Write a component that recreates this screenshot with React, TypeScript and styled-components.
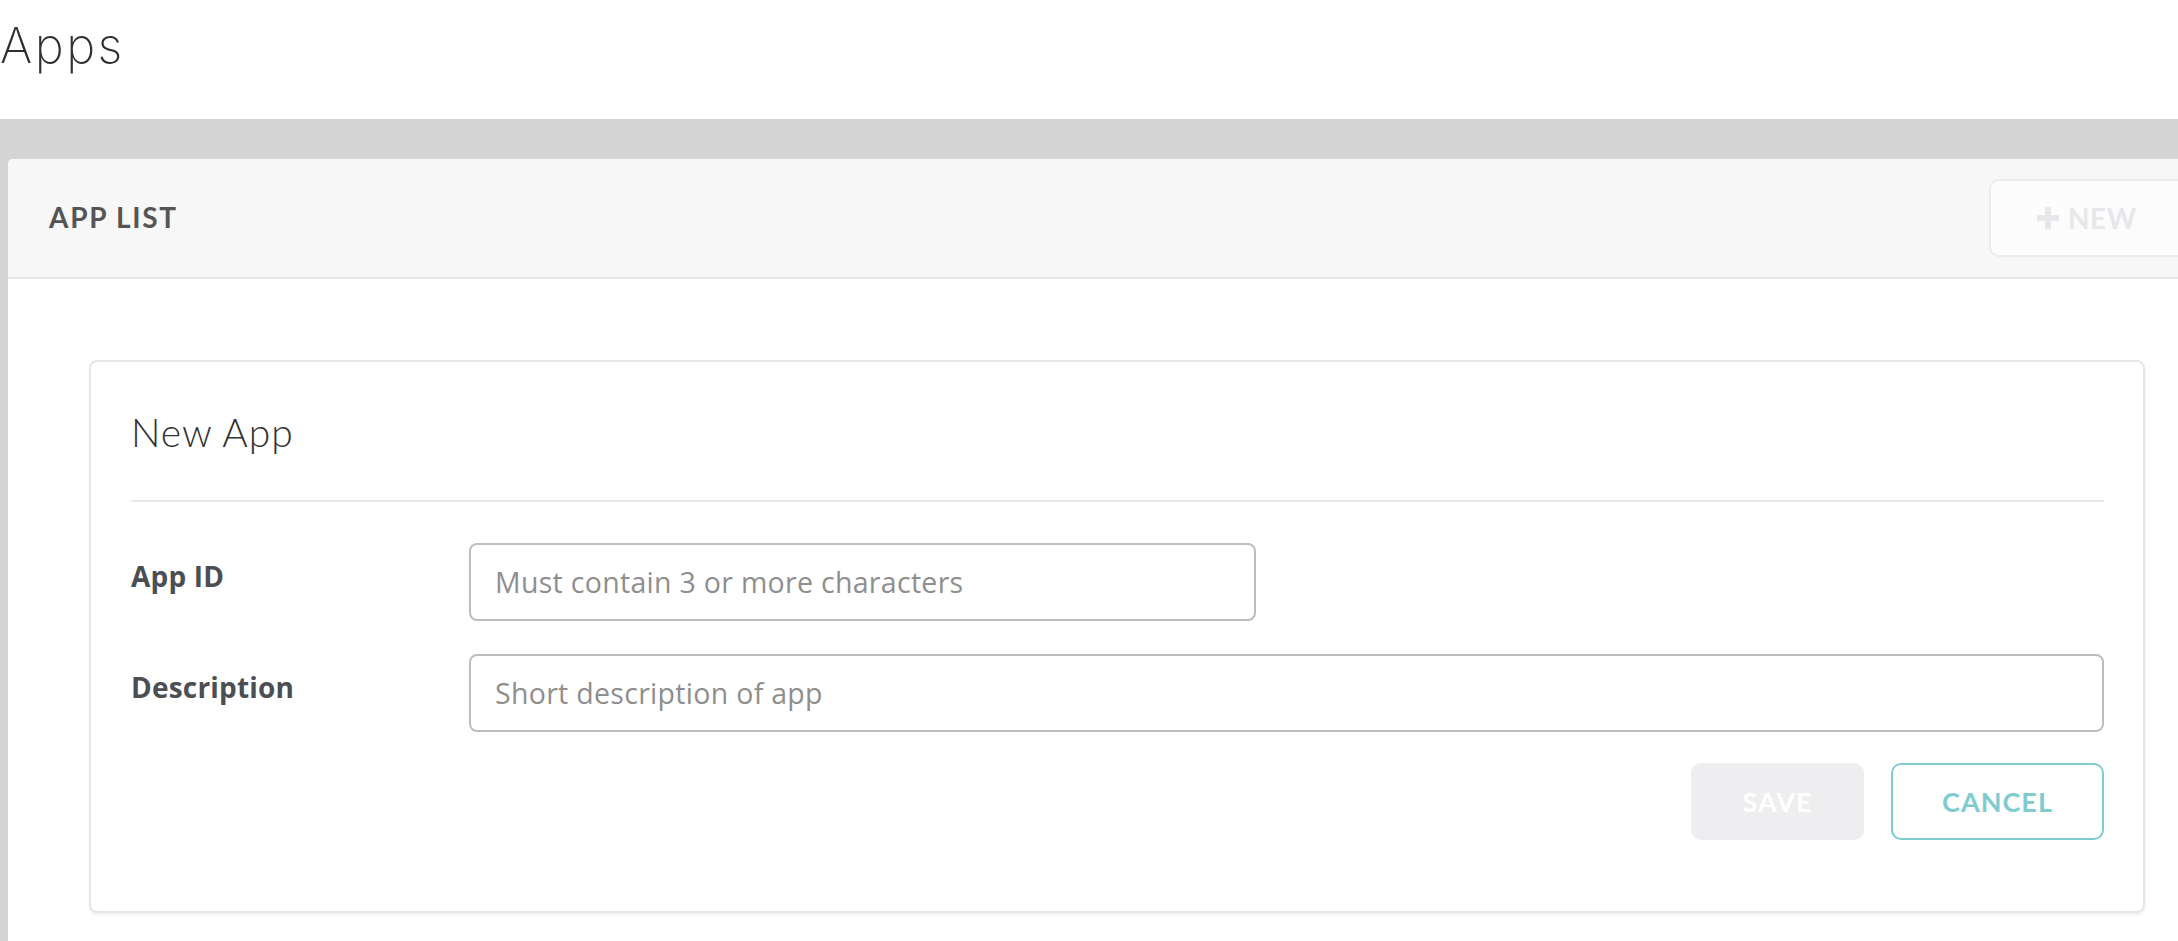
import React from "react";
import styled, { createGlobalStyle } from "styled-components";

const GlobalStyle = createGlobalStyle`
  *, *::before, *::after { box-sizing: border-box; }
  html, body { margin: 0; padding: 0; background: #ffffff; }
  body { font-family: Lato, "Open Sans", Arial, sans-serif; overflow: hidden; }
`;

const Page = styled.div`
  display: flex;
  flex-direction: column;
  height: 941px;
  overflow: hidden;
`;

const TitleBar = styled.header`
  height: 119px;
  flex: none;
  padding-top: 21px;
`;

const PageTitle = styled.h1`
  margin: 0;
  font-family: Inter, Lato, sans-serif;
  font-weight: 200;
  font-size: 49px;
  line-height: 49px;
  letter-spacing: 2.5px;
  color: #2f2f33;
`;

const Stage = styled.main`
  flex: 1;
  background: #d4d4d4;
  padding: 40px 0 0 8px;
  overflow: hidden;
  display: flex;
  flex-direction: column;
`;

const Card = styled.section`
  width: 2218px;
  flex: 1;
  background: #ffffff;
  border-radius: 5px 5px 0 0;
  display: flex;
  flex-direction: column;
`;

const CardHeader = styled.div`
  height: 120px;
  flex: none;
  display: flex;
  align-items: center;
  justify-content: space-between;
  padding: 0 27px 0 41px;
  background: #f7f7f7;
  border-bottom: 2px solid #e6e6e6;
  border-radius: 5px 5px 0 0;
`;

const HeaderTitle = styled.h2`
  margin: 0;
  font-size: 28px;
  font-weight: 700;
  letter-spacing: 1.7px;
  color: #555555;
  line-height: 1.2;
`;

const NewButton = styled.button`
  width: 210px;
  height: 78px;
  display: flex;
  align-items: center;
  gap: 9px;
  padding: 0 0 0 46px;
  background: #fcfcfc;
  border: 2px solid #ebebeb;
  border-radius: 10px;
  color: #e6e7ea;
  font-family: Lato, sans-serif;
  font-size: 28px;
  font-weight: 700;
  letter-spacing: 0.5px;
  cursor: default;
`;

const CardBody = styled.div`
  flex: 1;
  padding: 81px 81px 0 81px;
`;

const Panel = styled.div`
  border: 2px solid #e6e6e6;
  border-radius: 8px;
  padding: 0 39px 71px 40px;
  box-shadow: 0 2px 3px rgba(0, 0, 0, 0.06);
`;

const PanelHeader = styled.div`
  height: 140px;
  display: flex;
  align-items: center;
  border-bottom: 2px solid #e8e8e8;
`;

const PanelTitle = styled.h3`
  margin: 0;
  font-size: 39px;
  font-weight: 300;
  letter-spacing: 1px;
  color: #333333;
  line-height: 1.2;
  padding-top: 2px;
`;

const Form = styled.form`
  padding-top: 41px;
  display: flex;
  flex-direction: column;
  gap: 33px;
`;

const Row = styled.div`
  display: grid;
  grid-template-columns: 338px 1fr;
  align-items: start;
`;

const Label = styled.label`
  padding-top: 15px;
  font-family: "Open Sans", Lato, sans-serif;
  font-size: 28px;
  font-weight: 700;
  letter-spacing: 0.2px;
  line-height: 1.3;
  color: #4b4e53;
`;

const Input = styled.input<{ $width?: number }>`
  width: ${(p) => (p.$width ? `${p.$width}px` : "100%")};
  height: 78px;
  padding: 0 24px;
  border: 2px solid #bdbdbd;
  border-radius: 8px;
  font-family: "Open Sans", Lato, sans-serif;
  font-size: 28.5px;
  letter-spacing: 0.3px;
  color: #333;
  outline: none;
  background: #fff;
  &::placeholder { color: #8e8e8e; }
`;

const Actions = styled.div`
  display: flex;
  justify-content: flex-end;
  gap: 27px;
  margin-top: -2px;
`;

const ActionButton = styled.button<{ $variant: "save" | "cancel"; $width: number }>`
  width: ${(p) => p.$width}px;
  height: 77px;
  border-radius: 10px;
  font-family: Lato, sans-serif;
  font-size: 27px;
  font-weight: 700;
  letter-spacing: 1px;
  cursor: default;
  background: ${(p) => (p.$variant === "save" ? "#eeeef0" : "#ffffff")};
  color: ${(p) => (p.$variant === "save" ? "#ffffff" : "#7ecbd0")};
  border: ${(p) => (p.$variant === "save" ? "none" : "2px solid #7ecbd0")};
`;

const PlusIcon = () => (
  <svg width="22" height="22" viewBox="0 0 22 22" aria-hidden="true">
    <rect x="8" y="0" width="6" height="22" rx="1.5" fill="currentColor" />
    <rect x="0" y="8" width="22" height="6" rx="1.5" fill="currentColor" />
  </svg>
);

export default function App() {
  return (
    <>
      <GlobalStyle />
      <Page>
        <TitleBar>
          <PageTitle>Apps</PageTitle>
        </TitleBar>
        <Stage>
          <Card>
            <CardHeader>
              <HeaderTitle>APP LIST</HeaderTitle>
              <NewButton type="button">
                <PlusIcon />
                NEW
              </NewButton>
            </CardHeader>
            <CardBody>
              <Panel>
                <PanelHeader>
                  <PanelTitle>New App</PanelTitle>
                </PanelHeader>
                <Form onSubmit={(e) => e.preventDefault()}>
                  <Row>
                    <Label htmlFor="app-id">App ID</Label>
                    <Input id="app-id" $width={787} placeholder="Must contain 3 or more characters" />
                  </Row>
                  <Row>
                    <Label htmlFor="app-desc">Description</Label>
                    <Input id="app-desc" placeholder="Short description of app" />
                  </Row>
                  <Actions>
                    <ActionButton type="button" $variant="save" $width={173}>SAVE</ActionButton>
                    <ActionButton type="button" $variant="cancel" $width={213}>CANCEL</ActionButton>
                  </Actions>
                </Form>
              </Panel>
            </CardBody>
          </Card>
        </Stage>
      </Page>
    </>
  );
}
